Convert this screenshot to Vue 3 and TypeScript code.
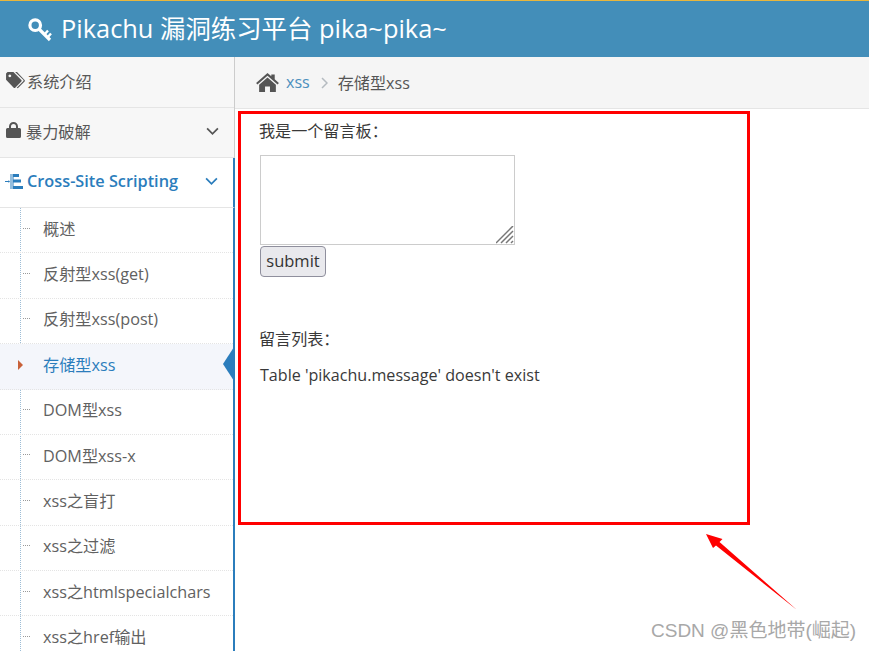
<script setup lang="ts">
const subItems: string[] = ['概述', '反射型xss(get)', '反射型xss(post)', '存储型xss', 'DOM型xss', 'DOM型xss-x', 'xss之盲打', 'xss之过滤', 'xss之htmlspecialchars', 'xss之href输出']
const activeItem = '存储型xss'
</script>

<template>
  <div class="page">
    <header class="topbar">
      <svg class="key" viewBox="0 0 24 24" width="24" height="24">
        <g fill="none" stroke="#fff">
          <circle cx="7.200" cy="7.200" r="5.300" stroke-width="3.200" />
          <path stroke-width="3.200" d="M11 11 22 22" />
          <path stroke-width="2.400" d="M16.500 16.500 20 12.500M19.500 19.500 23 15.500" />
        </g>
      </svg>
      <span class="brand">Pikachu 漏洞练习平台 pika~pika~</span>
    </header>
    <div class="body">
      <aside class="sidebar">
        <div class="menu-row first">
          <svg class="row-icon tag" viewBox="0 0 20 18" width="19" height="17">
            <path fill="#555" fill-rule="evenodd" d="M0 1.600 1.600 0h6.200l8.400 8.500q.7.800 0 1.600l-6.500 6.600q-.8.700-1.600 0L0 8.200zM4 2.600a1.500 1.500 0 1 0 .01 0z" />
            <path fill="#555" d="M9.600 0h2l8 8.400q.7.800 0 1.600l-6.600 6.800q-.8.800-1.700 0l6.900-7.100q.7-.8 0-1.600z" />
          </svg>
          <span>系统介绍</span>
        </div>
        <div class="menu-row second">
          <svg class="row-icon lock" viewBox="0 0 15 16" width="15" height="16">
            <path fill="#555" fill-rule="evenodd" d="M3 6V4.500a4.500 4.500 0 0 1 9 0V6h1.500q1.500 0 1.500 1.500v7q0 1.500-1.500 1.500h-12Q0 16 0 14.500v-7Q0 6 1.500 6zM5 6h5V4.500a2.500 2.500 0 0 0-5 0z" />
          </svg>
          <span>暴力破解</span>
          <svg class="chevron" viewBox="0 0 14 9" width="13" height="9">
            <path fill="none" stroke="#555" stroke-width="1.900" d="M1.200 1.200 7 7l5.800-5.800" />
          </svg>
        </div>
        <div class="menu-row open">
          <svg class="row-icon sitemap" viewBox="0 0 18 15" width="18" height="15">
            <path fill="#2b7dbc" d="M0 7h3.500V6l1.500 1.500L3.500 9V8H0zM5.500 0h1v15h-1zM7.500 0h1v15h-1zM8.500 0H14v3H8.500zM8.500 5.500H16v3H8.500zM8.500 12H18v3H8.500z" />
          </svg>
          <span class="open-title">Cross-Site Scripting</span>
          <svg class="chevron" viewBox="0 0 14 9" width="13" height="9">
            <path fill="none" stroke="#2b7dbc" stroke-width="1.900" d="M1.200 1.200 7 7l5.800-5.800" />
          </svg>
        </div>
        <ul class="submenu">
          <li v-for="item in subItems" :key="item" :class="{ active: item === activeItem }">
            <i class="marker"></i>
            <span>{{ item }}</span>
            <i v-if="item === activeItem" class="notch"></i>
          </li>
        </ul>
      </aside>
      <main class="main">
        <nav class="crumbs">
          <svg class="home" viewBox="0 0 24 20" width="23" height="19">
            <path fill="#555" d="M12 0 16 3.500V1.500h3.600v5.200L24 10.600 22.600 12.200 12 3 1.400 12.200 0 10.600z" />
            <path fill="#555" d="M12 4.700 20.800 12.400V20h-6.200v-5.800H9.400V20H3.200v-7.600z" />
          </svg>
          <a class="crumb-link">xss</a>
          <svg class="sep" viewBox="0 0 7 12" width="7" height="12">
            <path fill="none" stroke="#b5bbc0" stroke-width="1.500" d="M1 1l5 5-5 5" />
          </svg>
          <span class="crumb-now">存储型xss</span>
        </nav>
        <section class="content">
          <p class="lead">我是一个留言板：</p>
          <div class="board-wrap">
            <textarea class="board"></textarea>
            <svg class="grip" viewBox="0 0 18 18" width="18" height="18">
              <path fill="none" stroke="#777" stroke-width="1.500" d="M0 17 17 0M5 17 17 5M10 17 17 10M15 17 17 15" />
            </svg>
          </div>
          <button class="submit" type="button">submit</button>
          <p class="list-title">留言列表：</p>
          <p class="error">Table 'pikachu.message' doesn't exist</p>
        </section>
      </main>
    </div>
    <div class="red-box"></div>
    <svg class="arrow" viewBox="0 0 95 80" width="95" height="80">
      <path fill="#f00" d="M0 0 16.500 5 13.500 8 91 76 10 11.500 7 14z" />
    </svg>
    <div class="watermark">CSDN @黑色地带(崛起)</div>
  </div>
</template>

<style>
html, body { margin: 0; padding: 0; background: #fff; }
</style>

<style scoped>
.page {
  position: relative;
  width: 869px;
  height: 651px;
  overflow: hidden;
  background: #fff;
  color: #393939;
  font-family: "Open Sans", "Noto Sans CJK SC", sans-serif;
  font-size: 16.100px;
}
.topbar {
  box-sizing: border-box;
  height: 57px;
  background: #438eb9;
  border-top: 1px solid #e8b63c;
  display: flex;
  align-items: center;
  padding-left: 28px;
  color: #fff;
}
.key { flex: none; margin-right: 9px; margin-top: 1px; }
.brand { font-size: 25.400px; line-height: 1; }
.body { display: flex; height: 594px; }
.sidebar {
  box-sizing: border-box;
  flex: none;
  width: 235px;
  background: #f6f6f6;
  border-right: 1px solid #ccc;
  font-size: 16.200px;
  color: #585858;
}
.menu-row {
  box-sizing: border-box;
  height: 50px;
  display: flex;
  align-items: center;
  padding: 0 0 3px 6px;
  background: #f7f7f7;
  border-bottom: 1px solid #e5e5e5;
  position: relative;
}
.menu-row.first { height: 51px; }
.menu-row.second { padding-bottom: 4px; }
.row-icon { flex: none; }
.tag + span { margin-left: 2px; }
.lock { margin-right: 5px; margin-top: -1px; }
.sitemap { margin-left: -1px; margin-right: 4px; margin-top: 1px; }
.chevron { position: absolute; right: 15px; top: 19px; }
.menu-row.open { background: #fff; margin-right: -1px; border-right: 2px solid #2b7dbc; }
.open-title { color: #2b7dbc; font-weight: 600; font-size: 16.300px; }
.submenu {
  list-style: none;
  margin: 0 -1px 0 0;
  padding: 0;
  background: #fff;
  border-right: 2px solid #2b7dbc;
  position: relative;
  height: 443px;
}
.submenu::before {
  content: "";
  position: absolute;
  left: 20px;
  top: 0;
  bottom: 0;
  border-left: 1px dotted #9dbdd6;
}
.submenu li {
  box-sizing: border-box;
  height: 45.380px;
  display: flex;
  align-items: center;
  padding: 0 0 5px 43px;
  border-bottom: 1px dotted #e4e4e4;
  position: relative;
  color: #616161;
}
.marker {
  position: absolute;
  left: 23px;
  top: 44%;
  width: 7px;
  border-top: 1px dotted #9a9a9a;
}
.submenu li.active { background: #f4f6fb; color: #2b7dbc; }
.submenu li.active .marker {
  left: 18px;
  top: 16px;
  width: 0;
  height: 0;
  border-top: 5px solid transparent;
  border-bottom: 5px solid transparent;
  border-left: 5px solid #c86139;
}
.notch {
  position: absolute;
  right: -1px;
  top: 3px;
  width: 0;
  height: 0;
  border-top: 17px solid transparent;
  border-bottom: 17px solid transparent;
  border-right: 11px solid #2b7dbc;
}
.main { flex: 1; min-width: 0; }
.crumbs {
  box-sizing: border-box;
  height: 52px;
  background: #f5f5f5;
  border-bottom: 1px solid #e5e5e5;
  display: flex;
  align-items: center;
  padding: 0 0 1px 21px;
  font-size: 16.100px;
  color: #555;
}
.home { margin-right: 7px; }
.crumb-link { color: #4c8fbd; }
.sep { margin: 2px 10px 0 11px; }
.content { padding: 11px 0 0 25px; }
.lead, .list-title, .error { margin: 0; line-height: 22px; }
.lead, .list-title { text-indent: -1px; }
.board-wrap {
  position: relative;
  width: 255px;
  height: 90px;
  margin: 13px 0 1px;
}
.board {
  display: block;
  box-sizing: border-box;
  width: 100%;
  height: 100%;
  padding: 0;
  border: 1px solid #ccc;
  background: #fff;
  outline: none;
  resize: none;
}
.grip { position: absolute; right: 1px; bottom: 1px; }
.submit {
  display: block;
  box-sizing: border-box;
  width: 66px;
  height: 31px;
  padding: 0 0 2px;
  border: 1px solid #8f8f9d;
  border-radius: 4px;
  background: #e9e9ed;
  color: #333;
  font-family: "Open Sans", sans-serif;
  font-size: 16.500px;
}
.list-title { margin-top: 51px; }
.error { margin-top: 14px; }
.red-box {
  position: absolute;
  left: 238px;
  top: 111px;
  width: 512px;
  height: 414px;
  box-sizing: border-box;
  border: 3px solid #f00;
  pointer-events: none;
}
.arrow { position: absolute; left: 706px; top: 534px; }
.watermark {
  position: absolute;
  left: 651px;
  top: 619px;
  font-family: "Liberation Sans", "Noto Sans CJK SC", sans-serif;
  font-size: 19px;
  line-height: 24px;
  color: #a8a8a8;
  white-space: nowrap;
}
</style>
